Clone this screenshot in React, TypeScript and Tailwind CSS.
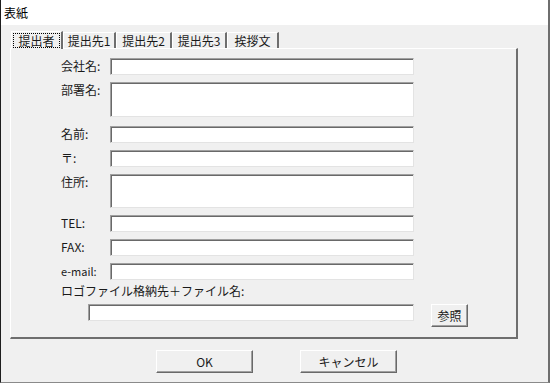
const font = "font-['MS_UI_Gothic','Noto_Sans_CJK_JP',sans-serif]"

function Field({ h = 17 }: { h?: number }) {
  return (
    <div
      className="w-full border border-t-[#a0a0a0] border-l-[#a0a0a0] border-b-[#e3e3e3] border-r-[#e3e3e3] bg-white shadow-[inset_1px_1px_0_#696969]"
      style={{ height: h }}
    />
  )
}

function Row({ label, h = 17, small }: { label: string; h?: number; small?: boolean }) {
  return (
    <div className="flex items-start">
      <div className={`w-[49px] shrink-0 pt-[1px] ${small ? "text-[11px]" : "text-[12px]"} leading-[14px] text-[#1a1a1a]`}>
        {label}
      </div>
      <div className="w-[304px]">
        <Field h={h} />
      </div>
    </div>
  )
}

function Button({ children, className = "" }: { children: React.ReactNode; className?: string }) {
  return (
    <div
      className={`flex items-center justify-center border border-t-white border-l-white border-b-[#696969] border-r-[#696969] bg-[#f0f0f0] text-[12px] text-[#1a1a1a] shadow-[inset_-1px_-1px_0_#a0a0a0] ${className}`}
    >
      {children}
    </div>
  )
}

const tabs = [
  { label: "提出先1", w: "w-[53px]" },
  { label: "提出先2", w: "w-[56px]" },
  { label: "提出先3", w: "w-[55px]" },
  { label: "挨拶文", w: "w-[52px]" },
]

export default function App() {
  return (
    <div className={`flex h-[383px] w-[550px] flex-col border-b border-l border-r-2 border-b-[#8a8a8a] border-l-[#1e1e1e] border-r-[#6e6e6e] bg-[#f0f0f0] ${font}`}>
      {/* title bar */}
      <div className="flex h-[25px] items-center bg-white pl-[3px] text-[12px] text-black">表紙</div>

      {/* tabs */}
      <div className="flex h-[23px] items-end pl-[10px] pt-[6px] text-[12px] text-[#1a1a1a]">
        <div className="relative z-10 mb-[-1px] flex h-[18px] w-[52px] items-center justify-center border-l border-t border-r-2 border-l-white border-t-white border-r-[#6e6e6e] bg-[#f0f0f0]">
          <span className="flex h-[15px] w-[47px] items-center justify-center border border-dotted border-black leading-[14px]">
            提出者
          </span>
        </div>
        {tabs.map((t) => (
          <div
            key={t.label}
            className={`flex h-[16px] items-center justify-center border-l border-t border-r-2 border-l-white border-t-white border-r-[#6e6e6e] leading-[14px] ${t.w}`}
          >
            {t.label}
          </div>
        ))}
      </div>

      {/* panel */}
      <div className="ml-[9px] h-[291px] w-[508px] border border-b-2 border-r-2 border-l-white border-t-white border-b-[#6e6e6e] border-r-[#6e6e6e] bg-[#f0f0f0] pl-[50px] pt-[9px]">
        <div className="flex flex-col gap-[7px]">
          <Row label="会社名:" />
          <div className="mb-[2px]">
            <Row label="部署名:" h={35} />
          </div>
          <Row label="名前:" />
          <Row label="〒:" />
          <Row label="住所:" h={34} />
          <Row label="TEL:" />
          <Row label="FAX:" />
          <Row label="e-mail:" small />
        </div>
        <div className="mt-[4px] text-[12px] leading-[14px] text-[#1a1a1a]">ロゴファイル格納先＋ファイル名:</div>
        <div className="mt-[6px] flex items-start">
          <div className="ml-[27px] w-[326px]">
            <Field />
          </div>
          <Button className="ml-[17px] h-[23px] w-[37px]">参照</Button>
        </div>
      </div>

      {/* buttons */}
      <div className="mt-[11px] flex gap-[47px] pl-[155px]">
        <Button className="h-[23px] w-[97px]">OK</Button>
        <Button className="h-[23px] w-[97px]">キャンセル</Button>
      </div>
    </div>
  )
}
